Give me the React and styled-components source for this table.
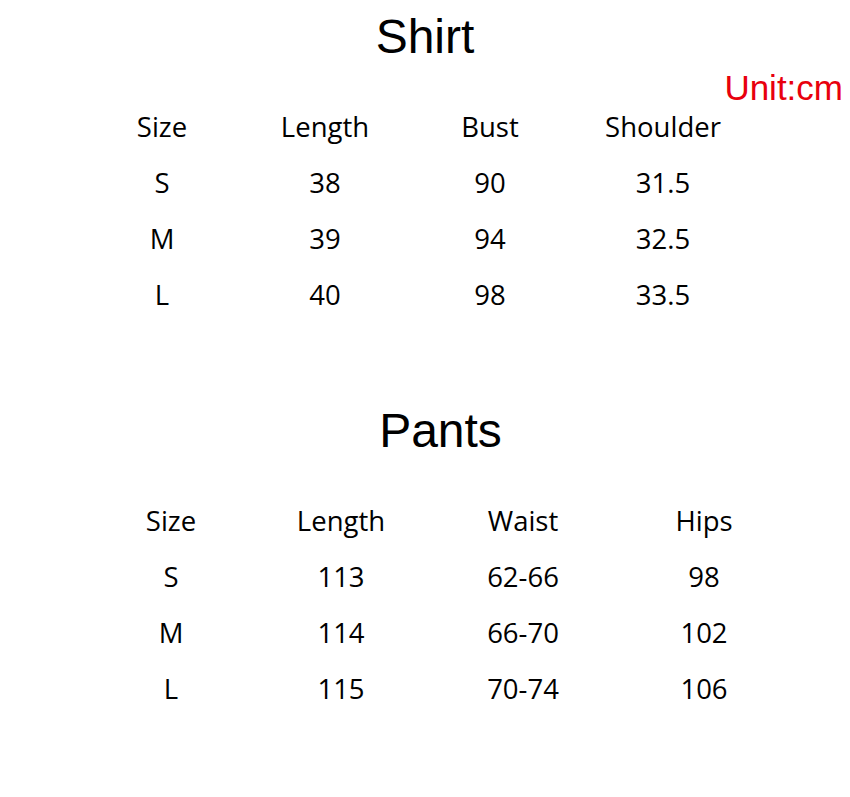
import React from 'react'
import styled, { createGlobalStyle } from 'styled-components'

const shirt = {
    title: 'Shirt',
    head: ['Size', 'Length', 'Bust', 'Shoulder'],
    rows: [
        ['S', '38', '90', '31.5'],
        ['M', '39', '94', '32.5'],
        ['L', '40', '98', '33.5'],
    ],
}

const pants = {
    title: 'Pants',
    head: ['Size', 'Length', 'Waist', 'Hips'],
    rows: [
        ['S', '113', '62-66', '98'],
        ['M', '114', '66-70', '102'],
        ['L', '115', '70-74', '106'],
    ],
}

function SizeTable({ data, cols, left }) {
    return (
        <Grid $cols={cols} $left={left}>
            {[data.head, ...data.rows].map((row, i) =>
                row.map((cell, j) => <Cell key={i + '-' + j}>{cell}</Cell>)
            )}
        </Grid>
    )
}

export default function App() {
    return (
        <Page>
            <GlobalStyle />
            <Title>{shirt.title}</Title>
            <Unit>Unit:cm</Unit>
            <SizeTable data={shirt} cols="164px 162px 168px 178px" left={80} />
            <Title $shift={31} $top={81}>{pants.title}</Title>
            <Spacer />
            <SizeTable data={pants} cols="162px 178px 186px 176px" left={90} />
        </Page>
    )
}

const GlobalStyle = createGlobalStyle`
    html, body {
        margin: 0;
        padding: 0;
        background: #ffffff;
    }
`

const Page = styled.div`
    width: 850px;
    min-height: 797px;
    box-sizing: border-box;
    padding-top: 9px;
    background: #ffffff;
    color: #000000;
`

const Title = styled.h1`
    margin: ${p => p.$top || 0}px 0 0 0;
    padding-left: ${p => p.$shift || 0}px;
    font-family: "Liberation Sans", Arial, sans-serif;
    font-weight: 400;
    font-size: 48px;
    line-height: 56px;
    height: 56px;
    text-align: center;
`

const Unit = styled.div`
    margin: 5px 7px -7px 0;
    text-align: right;
    font-family: "Liberation Sans", Arial, sans-serif;
    font-size: 35px;
    line-height: 35px;
    color: #e8000e;
`

const Spacer = styled.div`
    height: 33px;
`

const Grid = styled.div`
    display: grid;
    grid-template-columns: ${p => p.$cols};
    grid-auto-rows: 56px;
    margin-left: ${p => p.$left}px;
`

const Cell = styled.div`
    display: flex;
    align-items: center;
    justify-content: center;
    font-family: "Open Sans", "Noto Sans", sans-serif;
    font-size: 27.5px;
    white-space: nowrap;
`
